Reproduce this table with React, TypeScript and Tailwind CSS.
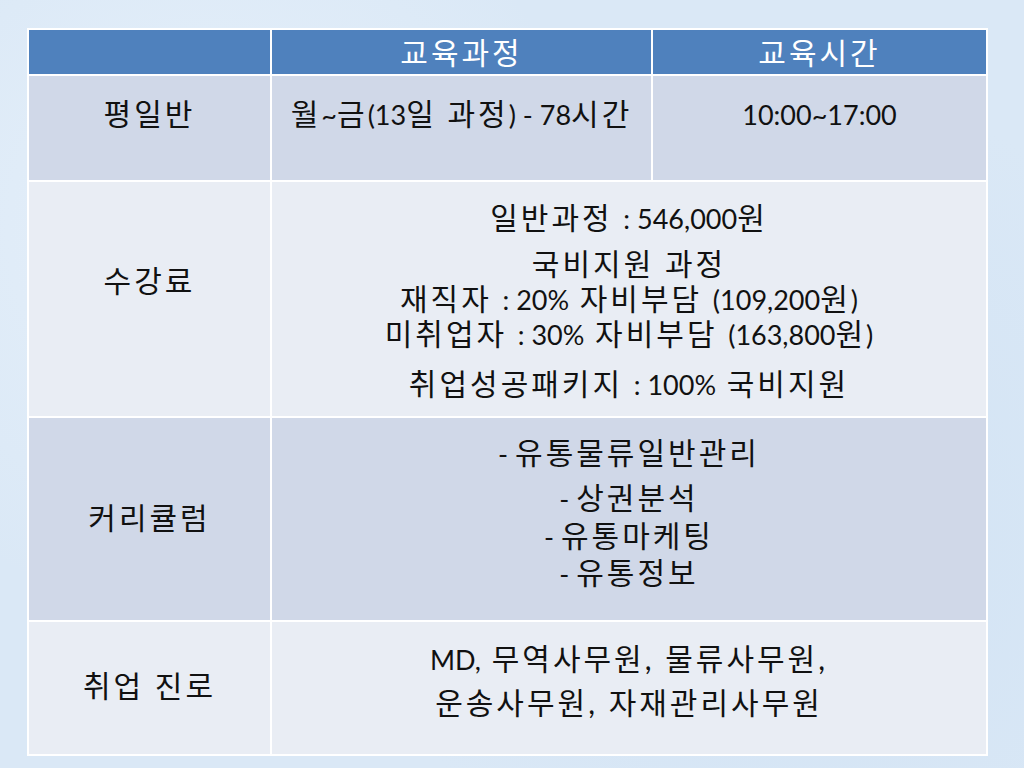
import type { ReactNode } from 'react'

// 숫자/영문 구간: 자간 없음, 약간 작은 크기
const N = ({ children }: { children: ReactNode }) => (
  <span className="tracking-normal text-[27px]">{children}</span>
)

const Line = ({ children, mt = '', h = 'h-[36px] leading-[36px]' }: { children: ReactNode; mt?: string; h?: string }) => (
  <div className={`${h} whitespace-nowrap ${mt}`}>{children}</div>
)

const font = { fontFamily: "Lato, 'Noto Sans CJK KR', sans-serif" }

export default function App() {
  return (
    <div
      className="w-[1024px] h-[768px] overflow-hidden bg-[#dae8f6] bg-[radial-gradient(circle_at_20%_30%,#e6f0fa_0,transparent_40%),radial-gradient(circle_at_80%_70%,#d2e3f4_0,transparent_45%)] pt-[28px] pl-[27px]"
      style={font}
    >
      <div className="w-[961px] grid grid-cols-[241px_379px_333px] gap-[2px] p-[2px] bg-white text-[30px] text-[#111] tracking-[3px]">
        {/* 헤더 */}
        <div className="h-[44px] bg-[#4f81bd]" />
        <div className="h-[44px] bg-[#4f81bd] text-white flex items-center justify-center">교육과정</div>
        <div className="h-[44px] bg-[#4f81bd] text-white flex items-center justify-center">교육시간</div>

        {/* 평일반 */}
        <div className="h-[104px] bg-[#d0d8e8] pt-[19px] text-center">
          <Line>평일반</Line>
        </div>
        <div className="h-[104px] bg-[#d0d8e8] pt-[19px] text-center">
          <Line>
            월<N>~</N>금<N>(13</N>일 과정<N>) - 78</N>시간
          </Line>
        </div>
        <div className="h-[104px] bg-[#d0d8e8] pt-[19px] text-center">
          <Line>
            <N>10:00~17:00</N>
          </Line>
        </div>

        {/* 수강료 */}
        <div className="h-[234px] bg-[#e9edf4] pt-[80px] text-center">
          <Line>수강료</Line>
        </div>
        <div className="col-span-2 h-[234px] bg-[#e9edf4] pt-[17px] text-center">
          <Line>
            일반과정 <N>: 546,000</N>원
          </Line>
          <Line mt="mt-[10px]">국비지원 과정</Line>
          <Line h="h-[35px] leading-[35px]">
            재직자 <N>: 20%</N> 자비부담 <N>(109,200</N>원<N>)</N>
          </Line>
          <Line h="h-[35px] leading-[35px]">
            미취업자 <N>: 30%</N> 자비부담 <N>(163,800</N>원<N>)</N>
          </Line>
          <Line mt="mt-[14px]">
            취업성공패키지 <N>: 100%</N> 국비지원
          </Line>
        </div>

        {/* 커리큘럼 */}
        <div className="h-[202px] bg-[#d0d8e8] pt-[81px] text-center">
          <Line>커리큘럼</Line>
        </div>
        <div className="col-span-2 h-[202px] bg-[#d0d8e8] pt-[16px] text-center">
          <Line>
            <N>- </N>유통물류일반관리
          </Line>
          <Line mt="mt-[9px]">
            <N>- </N>상권분석
          </Line>
          <Line mt="mt-[2px]">
            <N>- </N>유통마케팅
          </Line>
          <Line mt="mt-[1px]">
            <N>- </N>유통정보
          </Line>
        </div>

        {/* 취업 진로 */}
        <div className="h-[132px] bg-[#e9edf4] pt-[45px] text-center">
          <Line>취업 진로</Line>
        </div>
        <div className="col-span-2 h-[132px] bg-[#e9edf4] pt-[18px] text-center">
          <Line>
            <N>MD,</N> 무역사무원, 물류사무원,
          </Line>
          <Line mt="mt-[8px]">운송사무원, 자재관리사무원</Line>
        </div>
      </div>
    </div>
  )
}
